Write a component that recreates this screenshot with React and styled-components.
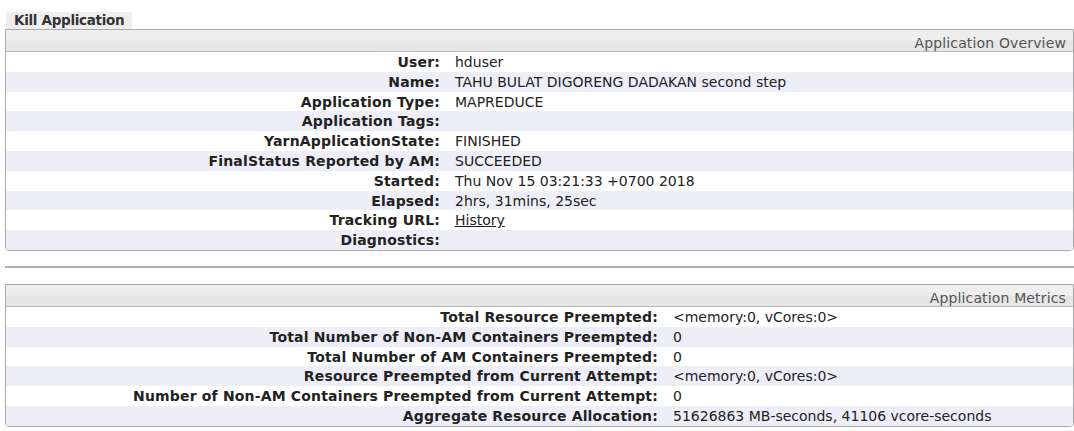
import React from 'react';
import styled, { createGlobalStyle } from 'styled-components';

const GlobalStyle = createGlobalStyle`
    body {
        margin: 0;
        background: #ffffff;
        font-family: "DejaVu Sans", Verdana, sans-serif;
        font-size: 14px;
        color: #222;
    }
`;

const Page = styled.div`
    padding: 12px 0 0 5px;
    width: 1069px;
`;

const Tab = styled.div`
    display: inline-block;
    margin-left: 1px;
    padding: 0 8px;
    height: 17px;
    line-height: 17px;
    background: #eeeeee;
    font-family: "DejaVu Sans", sans-serif;
    font-weight: bold;
    font-size: 13.5px;
    color: #333;
    letter-spacing: -0.3px;
    vertical-align: top;
`;

const Box = styled.div`
    border: 1px solid #aaaaaa;
    border-radius: 0 0 4px 4px;
    overflow: hidden;
`;

const Header = styled.div`
    height: 21px;
    line-height: 26px;
    padding-right: 7px;
    overflow: hidden;
    text-align: right;
    color: #555;
    letter-spacing: 0.15px;
    background: linear-gradient(#eeeeee 0%, #eeeeee 48%, #e6e6e6 52%, #e6e6e6 100%);
    border-bottom: 1px solid #bbbbbb;
`;

const Row = styled.div`
    display: grid;
    grid-template-columns: ${p => p.$labelWidth}px 1fr;
    height: 19.8px;
    line-height: 21px;
    background: ${p => (p.$odd ? '#eeeef9' : '#ffffff')};
`;

const Label = styled.div`
    text-align: right;
    font-weight: bold;
    padding-right: 8px;
    color: #222;
    letter-spacing: 0.17px;
    white-space: nowrap;
`;

const Value = styled.div`
    padding-left: 7px;
    white-space: nowrap;
`;

const Link = styled.a`
    color: #222;
    text-decoration: underline;
`;

const Rule = styled.div`
    margin: 15px 0 16px 0;
    height: 2px;
    background: #b0b0b0;
`;

const overview = [
    ['User:', 'hduser'],
    ['Name:', 'TAHU BULAT DIGORENG DADAKAN second step'],
    ['Application Type:', 'MAPREDUCE'],
    ['Application Tags:', ''],
    ['YarnApplicationState:', 'FINISHED'],
    ['FinalStatus Reported by AM:', 'SUCCEEDED'],
    ['Started:', 'Thu Nov 15 03:21:33 +0700 2018'],
    ['Elapsed:', '2hrs, 31mins, 25sec'],
    ['Tracking URL:', <Link href="#">History</Link>],
    ['Diagnostics:', ''],
];

const metrics = [
    ['Total Resource Preempted:', '<memory:0, vCores:0>'],
    ['Total Number of Non-AM Containers Preempted:', '0'],
    ['Total Number of AM Containers Preempted:', '0'],
    ['Resource Preempted from Current Attempt:', '<memory:0, vCores:0>'],
    ['Number of Non-AM Containers Preempted from Current Attempt:', '0'],
    ['Aggregate Resource Allocation:', '51626863 MB-seconds, 41106 vcore-seconds'],
];

const InfoBox = ({ title, rows, labelWidth }) => {
    return (
        <Box>
            <Header>{title}</Header>
            {rows.map(([k, v], i) => (
                <Row key={k} $odd={i % 2 === 1} $labelWidth={labelWidth}>
                    <Label>{k}</Label>
                    <Value>{v}</Value>
                </Row>
            ))}
        </Box>
    );
};

const App = () => {
    return (
        <Page>
            <GlobalStyle />
            <Tab>Kill Application</Tab>
            <InfoBox title="Application Overview" rows={overview} labelWidth={442} />
            <Rule />
            <InfoBox title="Application Metrics" rows={metrics} labelWidth={660} />
        </Page>
    );
};

export default App;
